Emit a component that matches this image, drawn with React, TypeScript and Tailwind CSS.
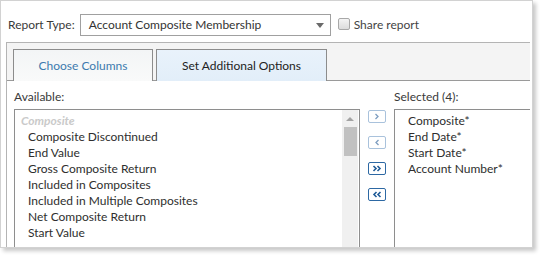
import React from 'react';

const available = [
  'Composite Discontinued',
  'End Value',
  'Gross Composite Return',
  'Included in Composites',
  'Included in Multiple Composites',
  'Net Composite Return',
  'Start Value',
];

const selected = ['Composite*', 'End Date*', 'Start Date*', 'Account Number*'];

// chevron paths: single or double, pointing right or left
function MoveButton({ dir, double }: { dir: 'right' | 'left'; double?: boolean }) {
  const color = double ? '#1f5b98' : '#7d9dc0';
  const flip = dir === 'left' ? 'scale(-1,1) translate(-16,0)' : undefined;
  return (
    <div
      className={
        double
          ? 'w-[18px] h-[13px] rounded-[2px] border border-[#2d68a3] bg-white flex items-center justify-center'
          : 'w-[18px] h-[13px] rounded-[2px] border border-[#a9c2dc] bg-white flex items-center justify-center'
      }
    >
      <svg width="16" height="11" viewBox="0 0 16 11">
        <g transform={flip} fill="none" stroke={color} strokeWidth={double ? 1.6 : 1.3}>
          {double ? (
            <>
              <path d="M4.5 3 L7 5.5 L4.5 8" />
              <path d="M8.5 3 L11 5.5 L8.5 8" />
            </>
          ) : (
            <path d="M6.5 3 L9 5.5 L6.5 8" />
          )}
        </g>
      </svg>
    </div>
  );
}

export default function App() {
  return (
    <div className="w-[542px] h-[257px] bg-white text-[12px] text-[#333] font-['Lato','Liberation_Sans',sans-serif]">
      <div className="w-[533px] h-[248px] border border-[#d2d2d2] bg-white overflow-hidden shadow-[3px_3px_4px_rgba(0,0,0,0.22)]">
        {/* header */}
        <div className="h-[41px] flex items-start pt-[13px] pl-[7px]">
          <span className="leading-[22px] text-[#3a3a3a]">Report Type:</span>
          <div className="ml-[5px] w-[251px] h-[22px] border border-[#a0a0a0] bg-white flex items-center pl-[8px] pr-[6px]">
            <span className="flex-1 text-[#333]">Account Composite Membership</span>
            <span className="w-0 h-0 border-l-[4px] border-r-[4px] border-t-[5px] border-l-transparent border-r-transparent border-t-[#6a6a6a]" />
          </div>
          <div className="ml-[7px] mt-[4px] w-[12px] h-[12px] rounded-[2px] border border-[#a8a8a8] bg-gradient-to-b from-[#f4f4f4] to-[#dcdcdc]" />
          <span className="ml-[4px] leading-[22px] text-[#444]">Share report</span>
        </div>

        {/* panel */}
        <div className="ml-[5px] mr-[2px] border-l border-t border-[#b4b4b4]">
          {/* tabs */}
          <div className="h-[38px] bg-[#f4f4f4] border-b border-[#9a9a9a] flex items-end pl-[6px] gap-[3px]">
            <div className="w-[140px] h-[32px] -mb-px border border-b-0 border-[#8c8c8c] bg-gradient-to-b from-[#f3f5f6] to-[#f9fafa] flex items-center justify-center text-[#3d7aae]">
              Choose Columns
            </div>
            <div className="w-[171px] h-[32px] -mb-px border border-b-0 border-[#8c8c8c] bg-gradient-to-b from-[#e9f2fb] to-[#e2eef9] flex items-center justify-center text-[#222]">
              Set Additional Options
            </div>
          </div>

          {/* columns */}
          <div className="flex pl-[7px] pt-[8px] bg-white">
            <div className="w-[346px]">
              <div className="leading-[16px] h-[20px] text-[#3a3a3a]">Available:</div>
              <div className="h-[150px] border border-[#8e8e8e] border-b-0 flex">
                <div className="flex-1 pt-[3px] leading-[16px]">
                  <div className="pl-[6px] italic font-bold text-[#cacaca]">Composite</div>
                  {available.map((item) => (
                    <div key={item} className="pl-[13px] text-[#2e2e2e]">
                      {item}
                    </div>
                  ))}
                </div>
                <div className="w-[16px] mr-[1px] bg-[#f0f0f0] flex flex-col items-center">
                  <span className="mt-[7px] w-0 h-0 border-l-[4px] border-r-[4px] border-b-[4px] border-l-transparent border-r-transparent border-b-[#a3a3a3]" />
                  <div className="mt-[6px] w-[13px] h-[29px] bg-[#c1c1c1]" />
                </div>
              </div>
            </div>

            <div className="w-[34px] pt-[21px] flex flex-col items-center gap-[13px]">
              <MoveButton dir="right" />
              <MoveButton dir="left" />
              <MoveButton dir="right" double />
              <MoveButton dir="left" double />
            </div>

            <div className="flex-1">
              <div className="leading-[16px] h-[20px] text-[#3a3a3a]">Selected (4):</div>
              <div className="h-[150px] border border-r-0 border-[#8e8e8e] border-b-0 pt-[3px] pl-[13px] leading-[16px]">
                {selected.map((item) => (
                  <div key={item} className="text-[#2e2e2e]">
                    {item}
                  </div>
                ))}
              </div>
            </div>
          </div>
        </div>
      </div>
    </div>
  );
}
